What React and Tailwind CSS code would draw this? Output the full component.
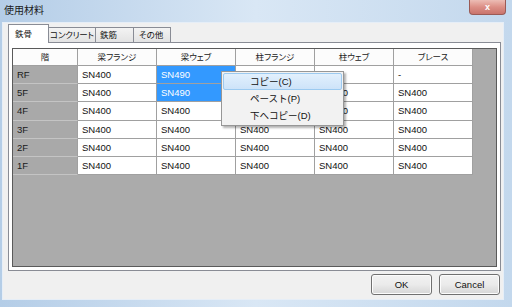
const FONT = "font-['Liberation_Sans','Noto_Sans_CJK_JP',sans-serif]";

const cols = ['梁フランジ', '梁ウェブ', '柱フランジ', '柱ウェブ', 'ブレース'];
const rows = [
  { name: 'RF', h: 'h-[18px]', cells: ['SN400', 'SN490', '-', '-', '-'] },
  { name: '5F', h: 'h-[18px]', cells: ['SN400', 'SN490', 'SN400', 'SN400', 'SN400'] },
  { name: '4F', h: 'h-[19px]', cells: ['SN400', 'SN400', 'SN400', 'SN400', 'SN400'] },
  { name: '3F', h: 'h-[18px]', cells: ['SN400', 'SN400', 'SN400', 'SN400', 'SN400'] },
  { name: '2F', h: 'h-[18px]', cells: ['SN400', 'SN400', 'SN400', 'SN400', 'SN400'] },
  { name: '1F', h: 'h-[18px]', cells: ['SN400', 'SN400', 'SN400', 'SN400', 'SN400'] },
];

function Tab({ label, cls }) {
  return (
    <div className={`h-[15px] border border-b-0 border-[#898c95] bg-gradient-to-b from-[#f3f3f3] to-[#e3e3e3] flex items-center whitespace-nowrap overflow-hidden text-[8.5px] leading-[10px] text-[#111] [font-feature-settings:'palt'] ${cls}`}>
      {label}
    </div>
  );
}

function Button({ label }) {
  return (
    <div className="w-[61px] h-[21px] rounded-[3px] border border-[#707070] bg-gradient-to-b from-[#f2f2f2] via-[#ebebeb] to-[#d6d6d6] shadow-[inset_0_0_0_1px_#fcfcfc] flex items-center justify-center text-[9.5px] leading-none text-[#111]">
      {label}
    </div>
  );
}

export default function App() {
  return (
    <div className={`relative w-[512px] h-[307px] overflow-hidden flex flex-col bg-gradient-to-r from-[#b4cde7] via-[#d9e7f5] to-[#c3d8ed] ${FONT}`}>
      {/* title bar */}
      <div className="h-[22px] flex items-start justify-between pl-[4px] pr-[6px]">
        <span className="mt-[5px] text-[10px] leading-[11px] text-[#1a1a1a]">使用材料</span>
        <div className="w-[37px] h-[15px] rounded-b-[4px] border border-t-0 border-[#9a5a55] bg-gradient-to-b from-[#ecbdb5] via-[#dc8f86] to-[#c9746c] flex items-center justify-center text-white text-[9px] leading-none font-bold">
          x
        </div>
      </div>

      {/* client */}
      <div className="flex-1 flex pl-[2px] pr-[8px] pb-[7px]">
        <div className="flex-1 flex flex-col border border-[#e6eef7] bg-[#f0f0f0]">
          {/* tab strip */}
          <div className="h-[19px] flex items-end pl-[5px]">
            <div className="relative z-10 w-[41px] h-[19px] -mb-px border border-b-0 border-[#898c95] bg-white flex items-center pl-[6px] text-[8.5px] leading-[10px] text-[#111]">
              鉄骨
            </div>
            <Tab label="コンクリート" cls="w-[47px] border-l-0 pl-[1px] tracking-[-0.2px]" />
            <Tab label="鉄筋" cls="w-[38px] border-l-0 pl-[4px]" />
            <Tab label="その他" cls="w-[37px] border-l-0 pl-[5px]" />
          </div>

          {/* tab panel */}
          <div className="h-[229px] ml-[5px] mr-[2px] border border-[#898c95] bg-white pt-[5px] px-[3px] pb-[3px] flex">
            <div className="flex-1 border border-[#5a5a5a] bg-[#ababab] flex flex-col">
              {/* header */}
              <div className="flex h-[17px]">
                <div className="w-[65px] border-r border-b border-[#a0a0a0] bg-[#fcfcfc] flex items-center justify-center text-[8.5px] leading-[10px] text-[#222]">
                  階
                </div>
                {cols.map((c) => (
                  <div key={c} className="w-[79px] border-r border-b border-[#a0a0a0] bg-[#fcfcfc] flex items-center justify-center text-[8.5px] leading-[10px] text-[#222] [font-feature-settings:'palt']">
                    {c}
                  </div>
                ))}
              </div>
              {rows.map((r, ri) => (
                <div key={r.name} className={`flex ${r.h}`}>
                  <div className="w-[65px] border-r border-b border-r-[#a0a0a0] border-b-[#c4c4c4] bg-[#a9a9a9] flex items-center pl-[4px] text-[9.5px] leading-none text-[#1a1a1a]">
                    {r.name}
                  </div>
                  {r.cells.map((v, ci) => {
                    const sel = ri < 2 && ci === 1;
                    return (
                      <div
                        key={ci}
                        className={`w-[79px] border-r border-b border-[#a0a0a0] flex items-center pl-[4px] text-[9.5px] leading-none ${sel ? 'bg-[#3399ff] text-white' : 'bg-white text-[#111]'}`}
                      >
                        {v}
                      </div>
                    );
                  })}
                </div>
              ))}
            </div>
          </div>

          {/* buttons */}
          <div className="mt-[3px] flex justify-end gap-[7px] pr-[3px]">
            <Button label="OK" />
            <Button label="Cancel" />
          </div>
        </div>
      </div>

      {/* context menu */}
      <div className="absolute left-[221px] top-[71px] w-[123px] h-[55px] border border-[#979797] bg-[#f2f2f2] shadow-[2px_2px_2px_rgba(0,0,0,0.3)] px-[1px] pt-[1px] flex flex-col text-[9.5px] leading-[11px] text-[#111]">
        <div className="h-[17px] rounded-[2px] border border-[#9ccaf0] bg-gradient-to-b from-[#e2f0fd] to-[#cde3f9] flex items-center pl-[26px]">
          <span className="leading-[11px]">コピー(C)</span>
        </div>
        <div className="h-[17px] flex items-center pl-[27px]">
          <span className="leading-[11px]">ペースト(P)</span>
        </div>
        <div className="h-[17px] flex items-center pl-[27px]">
          <span className="leading-[11px]">下へコピー(D)</span>
        </div>
      </div>
    </div>
  );
}
